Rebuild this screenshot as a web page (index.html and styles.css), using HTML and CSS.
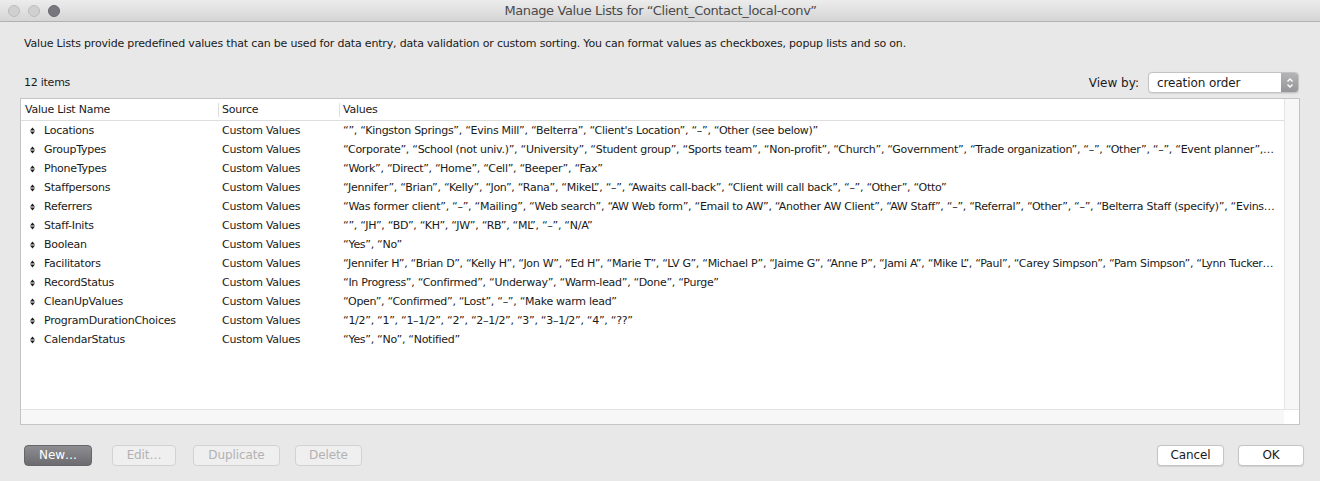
FILE: index.html
```html
<!DOCTYPE html>
<html>
<head>
<meta charset="utf-8">
<link rel="stylesheet" href="styles.css">
</head>
<body>
<div class="window">
  <div class="titlebar">
    <div class="lights">
      <span class="light off"></span>
      <span class="light off"></span>
      <span class="light on"></span>
    </div>
    <div class="title">Manage Value Lists for “Client_Contact_local-conv”</div>
  </div>
  <div class="content">
    <p class="desc">Value Lists provide predefined values that can be used for data entry, data validation or custom sorting. You can format values as checkboxes, popup lists and so on.</p>
    <div class="toolbar">
      <span class="count">12 items</span>
      <div class="viewby">
        <span class="viewby-label">View by:</span>
        <div class="select">
          <span class="select-text">creation order</span>
          <span class="stepper">
            <svg width="8" height="12" viewBox="0 0 8 12"><path d="M1.5 4.5 L4 2 L6.5 4.5 M1.5 7.5 L4 10 L6.5 7.5" fill="none" stroke="#fff" stroke-width="1.3"/></svg>
          </span>
        </div>
      </div>
    </div>
    <div class="table">
      <div class="table-body">
        <div class="main">
          <div class="row head">
            <div class="cell c-name">Value List Name</div>
            <div class="cell c-src">Source</div>
            <div class="cell c-val">Values</div>
          </div>
          <div class="row"><div class="cell c-name"><svg class="grip" width="5" height="8" viewBox="0 0 5 8"><path d="M0 3.4 L2.5 0.4 L5 3.4 Z M0 4.6 L2.5 7.6 L5 4.6 Z" fill="#1e1e1e"/></svg>Locations</div><div class="cell c-src">Custom Values</div><div class="cell c-val">“”, “Kingston Springs”, “Evins Mill”, “Belterra”, “Client's Location”, “–”, “Other (see below)”</div></div>
          <div class="row"><div class="cell c-name"><svg class="grip" width="5" height="8" viewBox="0 0 5 8"><path d="M0 3.4 L2.5 0.4 L5 3.4 Z M0 4.6 L2.5 7.6 L5 4.6 Z" fill="#1e1e1e"/></svg>GroupTypes</div><div class="cell c-src">Custom Values</div><div class="cell c-val">“Corporate”, “School (not univ.)”, “University”, “Student group”, “Sports team”, “Non-profit”, “Church”, “Government”, “Trade organization”, “–”, “Other”, “–”, “Event planner”,…</div></div>
          <div class="row"><div class="cell c-name"><svg class="grip" width="5" height="8" viewBox="0 0 5 8"><path d="M0 3.4 L2.5 0.4 L5 3.4 Z M0 4.6 L2.5 7.6 L5 4.6 Z" fill="#1e1e1e"/></svg>PhoneTypes</div><div class="cell c-src">Custom Values</div><div class="cell c-val">“Work”, “Direct”, “Home”, “Cell”, “Beeper”, “Fax”</div></div>
          <div class="row"><div class="cell c-name"><svg class="grip" width="5" height="8" viewBox="0 0 5 8"><path d="M0 3.4 L2.5 0.4 L5 3.4 Z M0 4.6 L2.5 7.6 L5 4.6 Z" fill="#1e1e1e"/></svg>Staffpersons</div><div class="cell c-src">Custom Values</div><div class="cell c-val">“Jennifer”, “Brian”, “Kelly”, “Jon”, “Rana”, “MikeL”, “–”, “Awaits call-back”, “Client will call back”, “–”, “Other”, “Otto”</div></div>
          <div class="row"><div class="cell c-name"><svg class="grip" width="5" height="8" viewBox="0 0 5 8"><path d="M0 3.4 L2.5 0.4 L5 3.4 Z M0 4.6 L2.5 7.6 L5 4.6 Z" fill="#1e1e1e"/></svg>Referrers</div><div class="cell c-src">Custom Values</div><div class="cell c-val">“Was former client”, “–”, “Mailing”, “Web search”, “AW Web form”, “Email to AW”, “Another AW Client”, “AW Staff”, “–”, “Referral”, “Other”, “–”, “Belterra Staff (specify)”, “Evins…</div></div>
          <div class="row"><div class="cell c-name"><svg class="grip" width="5" height="8" viewBox="0 0 5 8"><path d="M0 3.4 L2.5 0.4 L5 3.4 Z M0 4.6 L2.5 7.6 L5 4.6 Z" fill="#1e1e1e"/></svg>Staff-Inits</div><div class="cell c-src">Custom Values</div><div class="cell c-val">“”, “JH”, “BD”, “KH”, “JW”, “RB”, “ML”, “–”, “N/A”</div></div>
          <div class="row"><div class="cell c-name"><svg class="grip" width="5" height="8" viewBox="0 0 5 8"><path d="M0 3.4 L2.5 0.4 L5 3.4 Z M0 4.6 L2.5 7.6 L5 4.6 Z" fill="#1e1e1e"/></svg>Boolean</div><div class="cell c-src">Custom Values</div><div class="cell c-val">“Yes”, “No”</div></div>
          <div class="row"><div class="cell c-name"><svg class="grip" width="5" height="8" viewBox="0 0 5 8"><path d="M0 3.4 L2.5 0.4 L5 3.4 Z M0 4.6 L2.5 7.6 L5 4.6 Z" fill="#1e1e1e"/></svg>Facilitators</div><div class="cell c-src">Custom Values</div><div class="cell c-val">“Jennifer H”, “Brian D”, “Kelly H”, “Jon W”, “Ed H”, “Marie T”, “LV G”, “Michael P”, “Jaime G”, “Anne P”, “Jami A”, “Mike L”, “Paul”, “Carey Simpson”, “Pam Simpson”, “Lynn Tucker…</div></div>
          <div class="row"><div class="cell c-name"><svg class="grip" width="5" height="8" viewBox="0 0 5 8"><path d="M0 3.4 L2.5 0.4 L5 3.4 Z M0 4.6 L2.5 7.6 L5 4.6 Z" fill="#1e1e1e"/></svg>RecordStatus</div><div class="cell c-src">Custom Values</div><div class="cell c-val">“In Progress”, “Confirmed”, “Underway”, “Warm-lead”, “Done”, “Purge”</div></div>
          <div class="row"><div class="cell c-name"><svg class="grip" width="5" height="8" viewBox="0 0 5 8"><path d="M0 3.4 L2.5 0.4 L5 3.4 Z M0 4.6 L2.5 7.6 L5 4.6 Z" fill="#1e1e1e"/></svg>CleanUpValues</div><div class="cell c-src">Custom Values</div><div class="cell c-val">“Open”, “Confirmed”, “Lost”, “–”, “Make warm lead”</div></div>
          <div class="row"><div class="cell c-name"><svg class="grip" width="5" height="8" viewBox="0 0 5 8"><path d="M0 3.4 L2.5 0.4 L5 3.4 Z M0 4.6 L2.5 7.6 L5 4.6 Z" fill="#1e1e1e"/></svg>ProgramDurationChoices</div><div class="cell c-src">Custom Values</div><div class="cell c-val">“1/2”, “1”, “1–1/2”, “2”, “2–1/2”, “3”, “3–1/2”, “4”, “??”</div></div>
          <div class="row"><div class="cell c-name"><svg class="grip" width="5" height="8" viewBox="0 0 5 8"><path d="M0 3.4 L2.5 0.4 L5 3.4 Z M0 4.6 L2.5 7.6 L5 4.6 Z" fill="#1e1e1e"/></svg>CalendarStatus</div><div class="cell c-src">Custom Values</div><div class="cell c-val">“Yes”, “No”, “Notified”</div></div>
        </div>
        <div class="vscroll"></div>
      </div>
      <div class="hscroll-row">
        <div class="hscroll"></div>
        <div class="corner"></div>
      </div>
    </div>
    <div class="buttons">
      <div class="btn-group">
        <button class="btn btn-dark btn-new">New…</button>
        <button class="btn btn-disabled btn-edit">Edit…</button>
        <button class="btn btn-disabled btn-dup">Duplicate</button>
        <button class="btn btn-disabled btn-del">Delete</button>
      </div>
      <div class="btn-group">
        <button class="btn btn-cancel">Cancel</button>
        <button class="btn btn-ok">OK</button>
      </div>
    </div>
  </div>
</div>
</body>
</html>
```

FILE: styles.css
```css
* { box-sizing: border-box; }
html, body {
  margin: 0;
  padding: 0;
  background: #e8e8e8;
}
body {
  font-family: "DejaVu Sans", "Noto Sans", sans-serif;
  font-size: 11px;
  letter-spacing: -0.25px;
  color: #1a1a1a;
}
.window {
  width: 1320px;
  height: 481px;
  background: #e8e8e8;
  overflow: hidden;
}
.titlebar {
  height: 22px;
  background: linear-gradient(#ececec, #d5d5d5);
  border-bottom: 1px solid #b1b1b1;
  display: flex;
  align-items: center;
}
.lights {
  display: flex;
  gap: 8px;
  padding-left: 8px;
}
.light {
  width: 12px;
  height: 12px;
  border-radius: 50%;
  display: block;
}
.light.off {
  background: #d0d0d0;
  border: 1px solid #bdbdbd;
}
.light.on {
  background: #78777d;
  border: 1px solid #68676d;
}
.title {
  flex: 1;
  text-align: center;
  font-size: 13px;
  color: #4a4a4a;
  letter-spacing: -0.38px;
  margin-right: 59px;
}
.content {
  padding: 0 20px;
}
.desc {
  margin: 14px 0 0 4px;
  line-height: 16px;
  letter-spacing: -0.18px;
}
.toolbar {
  display: flex;
  justify-content: space-between;
  align-items: center;
  margin-top: 20px;
  height: 21px;
}
.count {
  padding-left: 4px;
}
.viewby {
  display: flex;
  align-items: center;
  gap: 9px;
  margin-right: 1px;
}
.viewby-label {
  font-size: 12px;
  letter-spacing: 0;
}
.select {
  width: 151px;
  height: 21px;
  background: #fff;
  border: 1px solid #c3c3c3;
  border-radius: 4px;
  display: flex;
  align-items: center;
  overflow: hidden;
  box-shadow: 0 0.5px 1px rgba(0,0,0,0.08);
}
.select-text {
  flex: 1;
  padding-left: 8px;
  font-size: 12px;
  letter-spacing: -0.1px;
}
.stepper {
  width: 17px;
  height: 100%;
  background: linear-gradient(#b4b4b7, #96969a);
  display: flex;
  align-items: center;
  justify-content: center;
}
.table {
  margin-top: 5px;
  width: 1280px;
  height: 327px;
  border: 1px solid #c4c4c4;
  background: #fff;
  display: flex;
  flex-direction: column;
}
.table-body {
  flex: 1;
  display: flex;
  min-height: 0;
}
.main {
  flex: 1;
  min-width: 0;
}
.vscroll {
  width: 15px;
  background: #f7f7f7;
  border-left: 1px solid #e4e4e4;
}
.hscroll-row {
  height: 15px;
  display: flex;
  border-top: 1px solid #e4e4e4;
}
.hscroll {
  flex: 1;
  background: #f7f7f7;
}
.corner {
  width: 15px;
  background: #fff;
}
.row {
  display: flex;
  height: 19px;
  align-items: center;
}
.row.head {
  height: 22px;
  border-bottom: 1px solid #dedede;
}
.cell {
  white-space: nowrap;
  overflow: hidden;
  text-overflow: ellipsis;
  display: flex;
  align-items: center;
  height: 100%;
}
.c-name {
  width: 198px;
  padding-left: 8px;
}
.c-src {
  width: 121px;
  padding-left: 3px;
}
.c-val {
  flex: 1;
  padding-left: 3px;
  padding-right: 2px;
  display: block;
  line-height: 19px;
  letter-spacing: -0.29px;
}
.row.head .cell {
  border-right: 1px solid #dedede;
  height: 14px;
}
.row.head .c-name { padding-left: 4px; }
.row.head .c-val {
  border-right: none;
  line-height: 14px;
  letter-spacing: -0.25px;
}
.grip {
  margin-left: 1px;
  margin-right: 9px;
  flex: none;
}
.buttons {
  margin-top: 20px;
  display: flex;
  justify-content: space-between;
  padding-left: 4px;
}
.btn-group {
  display: flex;
}
.btn {
  font-family: "DejaVu Sans", "Noto Sans", sans-serif;
  font-size: 12px;
  letter-spacing: -0.1px;
  height: 21px;
  border-radius: 4px;
  padding: 0;
  line-height: 19px;
  text-align: center;
}
.btn-dark {
  background: linear-gradient(#8e8d92, #6c6b70);
  border: 1px solid #66656a;
  color: #fff;
}
.btn-disabled {
  background: #efefef;
  border: 1px solid #d2d2d2;
  color: #b2b2b2;
}
.btn-cancel, .btn-ok {
  background: #fff;
  border: 1px solid #c4c4c4;
  color: #1a1a1a;
  box-shadow: 0 0.5px 1px rgba(0,0,0,0.1);
}
.btn-new { width: 68px; }
.btn-edit { width: 64px; margin-left: 20px; }
.btn-dup { width: 87px; margin-left: 17px; }
.btn-del { width: 67px; margin-left: 15px; }
.btn-cancel { width: 67px; }
.btn-ok { width: 66px; margin-left: 14px; margin-right: -4px; }
```
